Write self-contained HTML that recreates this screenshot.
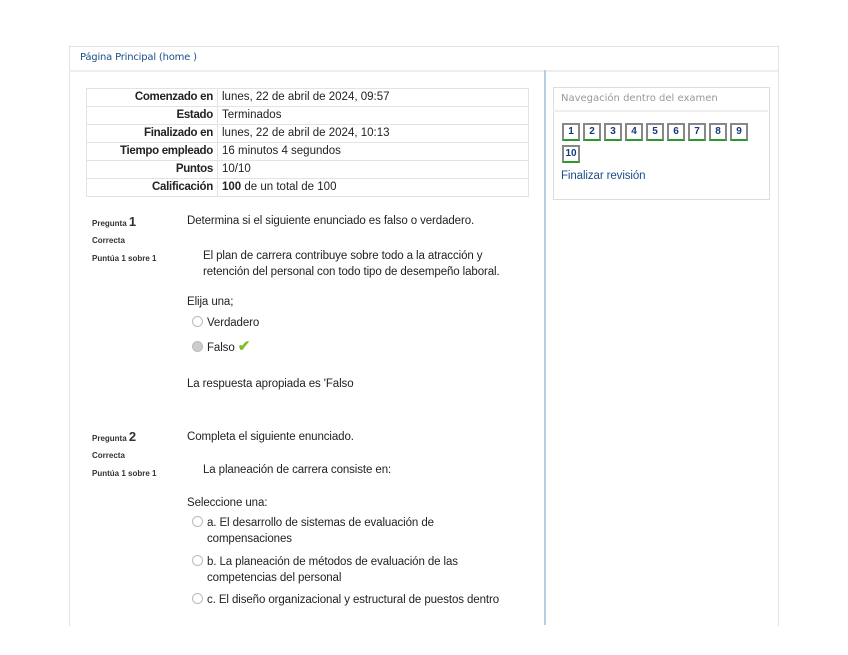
<!DOCTYPE html>
<html><head><meta charset="utf-8"><style>
body{margin:0;width:848px;height:655px;background:#fff;font-family:"Liberation Sans",sans-serif;color:#222;position:relative;overflow:hidden}
.abs{position:absolute}
.outer{left:69px;top:46px;width:708px;height:579px;border:1px solid #e3e3d8;border-bottom:none}
.hdr{left:69px;top:46px;width:709px;height:24px;border-bottom:2px solid #eee}
.hdr span{position:absolute;left:11px;top:6px;font-size:10px;color:#1a4f8a;font-family:"DejaVu Sans",sans-serif;letter-spacing:-0.2px}
.vline{left:544px;top:70px;width:2px;height:555px;background:#b8cde0}
table{position:absolute;left:86px;top:88px;border-collapse:collapse;font-size:11.5px}
td{border:1px solid #e3e3e3;height:17px;padding:0 4px;line-height:17px}
td.l{text-align:right;font-weight:bold;width:122px;letter-spacing:-0.3px}
td.r{width:302px}
.t{font-size:11.5px;letter-spacing:-0.1px}
.sm{font-size:8px;font-weight:bold;color:#333}
.radio{display:inline-block;width:9px;height:9px;border:1px solid #bbb;border-radius:50%;vertical-align:-1px;margin-right:4px}
.blk{left:553px;top:87px;width:215px;height:111px;border:1px solid #ddd}
.blkh{left:553px;top:87px;width:215px;height:23px;border-bottom:2px solid #eee}
.nb{display:inline-block;width:14px;height:14px;border:2px solid #888;border-bottom:2px solid #2a9a2a;font-size:10px;font-weight:bold;color:#123a7a;text-align:center;line-height:14px;margin-right:3px;box-sizing:content-box}
</style></head><body>
<div class="abs outer"></div>
<div class="abs hdr"><span>Página Principal (home )</span></div>
<div class="abs vline"></div>
<table>
<tr><td class="l">Comenzado en</td><td class="r">lunes, 22 de abril de 2024, 09:57</td></tr>
<tr><td class="l">Estado</td><td class="r">Terminados</td></tr>
<tr><td class="l">Finalizado en</td><td class="r">lunes, 22 de abril de 2024, 10:13</td></tr>
<tr><td class="l">Tiempo empleado</td><td class="r">16 minutos 4 segundos</td></tr>
<tr><td class="l">Puntos</td><td class="r">10/10</td></tr>
<tr><td class="l">Calificación</td><td class="r"><b>100</b> de un total de 100</td></tr>
</table>

<div class="abs sm" style="left:92px;top:214px">Pregunta <span style="font-size:13px">1</span></div>
<div class="abs sm" style="left:92px;top:236px">Correcta</div>
<div class="abs sm" style="left:92px;top:254px">Puntúa 1 sobre 1</div>
<div class="abs t" style="left:187px;top:215px">Determina si el siguiente enunciado es falso o verdadero.</div>
<div class="abs t" style="left:203px;top:248px;line-height:16px">El plan de carrera contribuye sobre todo a la atracción y<br>retención del personal con todo tipo de desempeño laboral.</div>
<div class="abs t" style="left:187px;top:296px">Elija una;</div>
<div class="abs t" style="left:192px;top:316px"><span class="radio"></span>Verdadero</div>
<div class="abs t" style="left:192px;top:337px"><span class="radio" style="background:#ccc"></span>Falso <span style="color:#7cbf2a;font-size:15px;font-weight:bold">✔</span></div>
<div class="abs t" style="left:187px;top:378px">La respuesta apropiada es 'Falso</div>

<div class="abs sm" style="left:92px;top:429px">Pregunta <span style="font-size:13px">2</span></div>
<div class="abs sm" style="left:92px;top:451px">Correcta</div>
<div class="abs sm" style="left:92px;top:469px">Puntúa 1 sobre 1</div>
<div class="abs t" style="left:187px;top:431px">Completa el siguiente enunciado.</div>
<div class="abs t" style="left:203px;top:464px">La planeación de carrera consiste en:</div>
<div class="abs t" style="left:187px;top:497px">Seleccione una:</div>
<div class="abs t" style="left:192px;top:515px;line-height:16px"><span class="radio"></span>a. El desarrollo de sistemas de evaluación de<br><span style="padding-left:15px">compensaciones</span></div>
<div class="abs t" style="left:192px;top:554px;line-height:16px"><span class="radio"></span>b. La planeación de métodos de evaluación de las<br><span style="padding-left:15px">competencias del personal</span></div>
<div class="abs t" style="left:192px;top:593px"><span class="radio"></span>c. El diseño organizacional y estructural de puestos dentro</div>

<div class="abs blk"></div>
<div class="abs blkh"></div>
<div class="abs" style="left:561px;top:93px;font-size:10px;color:#999;font-family:'DejaVu Sans',sans-serif">Navegación dentro del examen</div>
<div class="abs" style="left:562px;top:123px;width:205px;line-height:21px;font-size:0">
<span class="nb">1</span><span class="nb">2</span><span class="nb">3</span><span class="nb">4</span><span class="nb">5</span><span class="nb">6</span><span class="nb">7</span><span class="nb">8</span><span class="nb">9</span><br><span class="nb">10</span>
</div>
<div class="abs t" style="left:561px;top:170px;color:#1a4f8a">Finalizar revisión</div>
</body></html>
